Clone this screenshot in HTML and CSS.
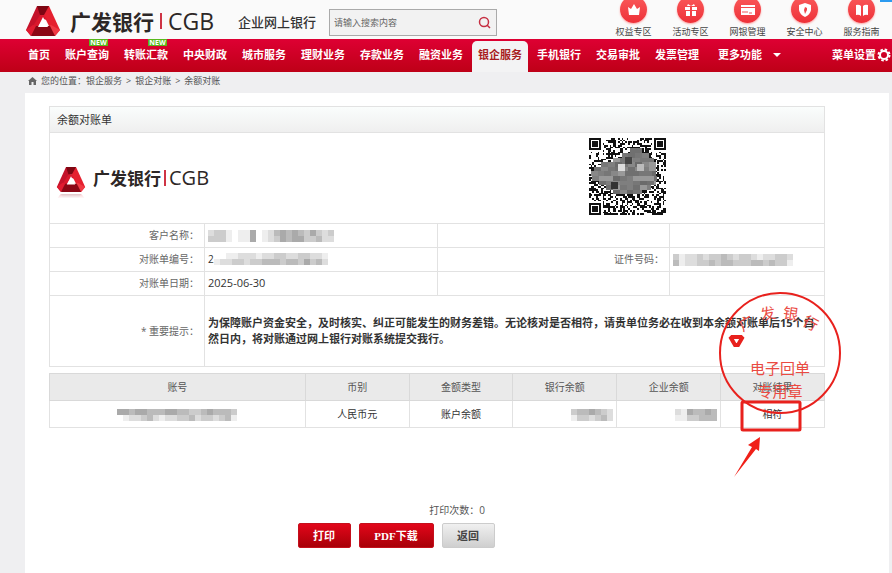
FILE: index.html
```html
<!DOCTYPE html>
<html lang="zh-CN">
<head>
    <meta charset="UTF-8">
    <title>余额对账单</title>
    <link rel="stylesheet" href="styles.css">
</head>
<body>
    <svg class="defs" width="0" height="0" aria-hidden="true">
        <symbol id="mark" viewBox="0 0 36 32">
            <path d="M13 1h-1L1 25l5 6 12-22z" fill="#c4122a"/>
            <path d="M24 1h-1l-5 8 11 22h1l5-6z" fill="#e5202f"/>
            <path d="M12 1h12l-5 9h-4z" fill="#7d0612"/>
            <path d="M15 10h4l3 5-4-1-5 8-5-1z" fill="#d9182c"/>
            <path d="M1 25l7-5 6 2-8 9z" fill="#e01b30"/>
            <path d="M35 25l-9-5-4 2 8 9z" fill="#f03a44"/>
            <path d="M11 21h14l5 10H6z" fill="#8b0715"/>
            <path d="M18 12l5 10H13z" fill="#fff"/>
        </symbol>
    </svg>

    <header class="header">
        <a class="logo" href="#">
            <svg class="logo-mark" viewBox="0 0 36 32"><use href="#mark"/></svg>
            <span class="logo-name">广发银行</span>
            <span class="logo-bar"></span>
            <span class="logo-en">CGB</span>
        </a>
        <span class="site-name">企业网上银行</span>
        <form class="search">
            <input class="search-input" type="text" placeholder="请输入搜索内容" aria-label="搜索">
            <button class="search-btn" type="button" aria-label="搜索">
                <svg width="13" height="13" viewBox="0 0 13 13" fill="none" stroke="#c62f42" stroke-width="1.500"><circle cx="6" cy="6" r="4.500"/><path d="M9 9l3 3"/></svg>
            </button>
        </form>
        <div class="quick">
            <a class="quick-item" href="#">
                <span class="quick-icon"><svg viewBox="0 0 14 14"><path d="M1 4l3 2 3-5 3 5 3-2-1 8H2z"/></svg></span>
                <span>权益专区</span>
            </a>
            <a class="quick-item" href="#">
                <span class="quick-icon"><svg viewBox="0 0 14 14"><path d="M1 4h5v3H1zM8 4h5v3H8zM2 8h4v5H2zM8 8h4v5H8zM4 1l3 2 3-2 1 2H3z"/></svg></span>
                <span>活动专区</span>
            </a>
            <a class="quick-item" href="#">
                <span class="quick-icon"><svg viewBox="0 0 14 14"><path d="M0 2h14v2H0zM0 5h14v7H0z"/><path d="M2 8v2M4 8v2M6 8v2M8 10h3" stroke="#f0555a" fill="none"/></svg></span>
                <span>网银管理</span>
            </a>
            <a class="quick-item" href="#">
                <span class="quick-icon"><svg viewBox="0 0 14 14"><path d="M7 0l6 2v5q-1 5-6 7-5-2-6-7V2z"/><path d="M7 4l2 1v2L7 11 6 7z" fill="#f0454b"/></svg></span>
                <span>安全中心</span>
            </a>
            <a class="quick-item" href="#">
                <span class="quick-icon"><svg viewBox="0 0 14 14"><path d="M1 2q3-1 5 1v10q-2-2-5-1zM8 3q2-2 5-1v10q-3-1-5 1z"/></svg></span>
                <span>服务指南</span>
            </a>
        </div>
        <span class="corner-tab"></span>
    </header>

    <nav class="nav">
        <a href="#">首页</a>
        <a class="new" href="#">账户查询<span class="new-tag">NEW</span></a>
        <a class="new" href="#">转账汇款<span class="new-tag">NEW</span></a>
        <a href="#">中央财政</a>
        <a href="#">城市服务</a>
        <a href="#">理财业务</a>
        <a href="#">存款业务</a>
        <a href="#">融资业务</a>
        <a class="active" href="#">银企服务</a>
        <a href="#">手机银行</a>
        <a href="#">交易审批</a>
        <a href="#">发票管理</a>
        <a class="more" href="#">更多功能<span class="caret"></span></a>
        <a class="setting" href="#">菜单设置<svg width="14" height="14" viewBox="0 0 14 14" fill="none" stroke="#fff"><circle cx="7" cy="7" r="4" stroke-width="2"/><circle cx="7" cy="7" r="5.500" stroke-width="2" stroke-dasharray="2.5 1.82"/></svg></a>
    </nav>

    <div class="crumbs">
        <svg width="9" height="8" viewBox="0 0 9 8"><path d="M4.500 0L9 4H8v4H5.500V5h-2v3H1V4H0z" fill="#666"/></svg>
        <span>您的位置：<a href="#">银企服务</a></span>
        <span>&gt;</span>
        <a href="#">银企对账</a>
        <span>&gt;</span>
        <span>余额对账</span>
    </div>

    <main class="panel">
        <div class="sheet">
            <h1 class="sheet-title">余额对账单</h1>
            <div class="sheet-head">
                <div class="logo logo-small">
                    <svg class="logo-mark" viewBox="0 0 36 32"><use href="#mark"/></svg>
                    <span class="logo-name">广发银行</span>
                    <span class="logo-bar"></span>
                    <span class="logo-en">CGB</span>
                </div>
                <svg class="qr" id="qr" viewBox="0 0 45 45" shape-rendering="crispEdges"></svg>
            </div>

            <table class="info">
                <colgroup><col class="c20"><col class="c30"><col class="c30"><col class="c20"></colgroup>
                <tr>
                    <th>客户名称：</th>
                    <td><svg class="mosaic" data-cells="dccefeeafedbababcacdc|cccefeeafedcabaaccbdd"></svg></td>
                    <td></td>
                    <td></td>
                </tr>
                <tr>
                    <th>对账单编号：</th>
                    <td><span class="masked">2<svg class="mosaic" data-cells="ffeedddeddccddccdde|eddccdccbbbcbbcacbd"></svg></span></td>
                    <th>证件号码：</th>
                    <td><svg class="mosaic" data-cells="ceddcdccbcdccdeddccd|beddccbcbbcccbbcbcce"></svg></td>
                </tr>
                <tr>
                    <th>对账单日期：</th>
                    <td class="date">2025-06-30</td>
                    <td></td>
                    <td></td>
                </tr>
                <tr class="notice">
                    <th>* 重要提示：</th>
                    <td colspan="3">为保障账户资金安全，及时核实、纠正可能发生的财务差错。无论核对是否相符，请贵单位务必在收到本余额对账单后15个自然日内，将对账通过网上银行对账系统提交我行。</td>
                </tr>
            </table>

            <table class="list">
                <thead>
                    <tr>
                        <th class="acct">账号</th>
                        <th>币别</th>
                        <th>金额类型</th>
                        <th>银行余额</th>
                        <th>企业余额</th>
                        <th>对账结果</th>
                    </tr>
                </thead>
                <tbody>
                    <tr>
                        <td><svg class="mosaic" data-cells="aabaabbbaabbccbabbbc|feddcbdeddccbdccdcbe"></svg></td>
                        <td>人民币元</td>
                        <td>账户余额</td>
                        <td class="num"><svg class="mosaic" data-cells="cbbabcd|eccdcbd"></svg></td>
                        <td class="num"><svg class="mosaic" data-cells="deabbab|eeccbbb"></svg></td>
                        <td>相符</td>
                    </tr>
                </tbody>
            </table>

            <!-- 电子回单专用章 -->
            <svg class="stamp" width="126" height="190" viewBox="0 0 126 190">
                <circle cx="63" cy="63" r="60" class="line-thin"/>
                <g class="seal-text">
                    <text transform="translate(32 38) rotate(-30)">广</text>
                    <text transform="translate(52 29) rotate(-10)">发</text>
                    <text transform="translate(73 29) rotate(8)">银</text>
                    <text transform="translate(91 38) rotate(28)">行</text>
                </g>
                <g class="seal-text seal-flat">
                    <text x="63" y="84">电子回单</text>
                    <text x="63" y="107">专用章</text>
                </g>
                <path d="M15 47h9l1 1-4 7h-3l-4-7z" class="line-mark"/>
                <rect x="25" y="112" width="58" height="28" rx="1" class="line-box"/>
                <path d="M17 187L35 157l-4-2 12-8-1 14-3-2z" fill="#f02018"/>
            </svg>
        </div>

        <p class="count">打印次数：<span>0</span></p>
        <div class="actions">
            <button class="btn" type="button">打印</button>
            <button class="btn btn-wide" type="button">PDF下载</button>
            <button class="btn btn-gray" type="button">返回</button>
        </div>
    </main>
    <script src="script.js"></script>
</body>
</html>
```
FILE: styles.css
```css
* {
    box-sizing: border-box;
}
body {
    margin: 0;
    min-height: 100vh;
    display: flex;
    flex-direction: column;
    background: #efeff1;
    color: #333;
    font-family: "Open Sans", "Noto Sans CJK SC", sans-serif;
    font-size: 10px;
}
a {
    color: inherit;
    text-decoration: none;
}
.defs {
    position: absolute;
}

/* header */
.header {
    position: relative;
    display: flex;
    align-items: center;
    height: 39px;
    padding: 0 2px 0 25px;
    background: #fafafa;
    overflow: hidden;
}
.logo {
    display: flex;
    align-items: center;
    color: #2d2726;
    padding-top: 3px;
}
.logo-mark {
    flex: none;
    width: 36px;
    height: 32px;
    margin-right: 9px;
}
.logo-name {
    font-size: 21px;
    font-weight: bold;
    line-height: 32px;
    font-family: "Noto Sans CJK SC", sans-serif;
}
.logo-bar {
    flex: none;
    width: 2px;
    height: 16px;
    margin: 0 6px;
    background: #cf3445;
}
.logo-en {
    font-size: 23px;
    font-weight: 500;
    line-height: 32px;
}
.site-name {
    margin: 4px 0 0 24px;
    font-size: 13px;
    font-weight: 500;
    color: #333;
    white-space: nowrap;
}
.search {
    display: flex;
    width: 168px;
    height: 27px;
    margin: 6px 0 0 13px;
    border: 1px solid #aaa;
    background: #f2f2f2;
}
.search-input {
    flex: 1;
    min-width: 0;
    padding: 0 4px;
    border: 0;
    background: none;
    font: inherit;
    font-size: 9px;
}
.search-input::placeholder {
    color: #666;
}
.search-btn {
    width: 24px;
    padding: 2px 0 0;
    border: 0;
    background: none;
}
.quick {
    display: flex;
    align-self: flex-start;
    margin-left: auto;
    margin-top: -4px;
}
.quick-item {
    display: flex;
    flex-direction: column;
    align-items: center;
    width: 57px;
    font-size: 9px;
    line-height: 17px;
    color: #444;
}
.quick-icon {
    display: flex;
    align-items: center;
    justify-content: center;
    width: 27px;
    height: 27px;
    border-radius: 50%;
    background: linear-gradient(#fa5a5a, #ee3038);
    box-shadow: 0 1px 2px #ffa0a0;
}
.quick-icon svg {
    width: 14px;
    height: 14px;
    fill: #fff;
}
.corner-tab {
    position: absolute;
    top: 0;
    right: 0;
    width: 12px;
    height: 2px;
    background: #2c9bf0;
}

/* menu */
.nav {
    display: flex;
    align-items: flex-end;
    gap: 3px;
    height: 33px;
    padding: 0 1px 0 22px;
    background: linear-gradient(#de0033, #be0017);
    color: #fff;
    font-size: 11px;
    font-weight: bold;
    white-space: nowrap;
}
.nav a {
    position: relative;
    height: 31px;
    padding: 0 6px;
    line-height: 27px;
}
.nav .active {
    color: #a81c20;
    background: #f3f3f4;
    border-radius: 5px 5px 0 0;
}
.new-tag {
    position: absolute;
    top: -2px;
    right: 7px;
    width: 19px;
    height: 7px;
    background: #58b81c;
    font-size: 7px;
    line-height: 7px;
    text-align: center;
}
.nav .more {
    margin-left: 4px;
}
.caret {
    display: inline-block;
    margin-left: 11px;
    border: 4px solid transparent;
    border-top-color: #fff;
    border-bottom: 0;
    vertical-align: 2px;
}
.nav .setting {
    display: flex;
    align-items: center;
    gap: 1px;
    height: 27px;
    margin: 0 0 4px auto;
    padding: 0;
}

.crumbs {
    display: flex;
    align-items: center;
    gap: 4px;
    height: 21px;
    padding: 0 28px 4px;
    font-size: 9px;
    color: #555;
}

/* content */
.panel {
    flex: 1;
    margin: 0 3px 0 25px;
    padding: 13px 0 24px;
    background: #fff;
}
.sheet {
    position: relative;
    margin: 0 64px 0 24px;
}
.sheet-title {
    margin: 0;
    height: 27px;
    padding: 0 7px;
    border: 1px solid #e2e2e2;
    background: linear-gradient(#fafdfc, #efefef);
    font-size: 11px;
    font-weight: normal;
    line-height: 25px;
}
.sheet-head {
    display: flex;
    align-items: center;
    height: 90px;
    padding-left: 6px;
    border: 1px solid #e2e2e2;
    border-width: 0 1px;
}
.logo-small {
    width: 533px;
    padding-top: 0;
}
.logo-small .logo-mark {
    width: 30px;
    height: 27px;
    margin: 2px 7px 0 0;
    -webkit-box-reflect: below 0 linear-gradient(transparent 80%, rgba(0, 0, 0, 0.3));
}
.logo-small .logo-name {
    font-size: 17px;
}
.logo-small .logo-bar {
    margin: 0 3px;
}
.logo-small .logo-en {
    font-size: 20px;
}
.qr {
    width: 77px;
    height: 77px;
    margin-top: -4px;
}
table {
    width: 100%;
    border-collapse: collapse;
    table-layout: fixed;
}
th, td {
    border: 1px solid #e2e2e2;
    font-weight: normal;
}
.c20 {
    width: 20%;
}
.c30 {
    width: 30%;
}
.info th,
.info td {
    height: 24px;
    padding: 0 3px 1px;
    line-height: 16px;
}
.info th {
    padding-right: 5px;
    text-align: right;
    color: #666;
}
.info .date {
    font-size: 11px;
}
.info .notice th,
.info .notice td {
    height: 71px;
}
.info .notice td {
    font-size: 11px;
    font-weight: bold;
}
.masked {
    display: flex;
    align-items: center;
}
.mosaic {
    display: inline-block;
    height: 12px;
    vertical-align: middle;
}
.list {
    margin-top: 6px;
    text-align: center;
}
.list th,
.list td {
    height: 27px;
    padding: 0 0 1px;
}
.list th {
    background: #eaeaea;
    border-color: #d9d9d9;
    color: #555;
}
.list .acct {
    width: 33%;
}
.list .num {
    text-align: right;
    padding-right: 3px;
}

/* seal and callout lie over the tables */
.stamp {
    position: absolute;
    top: 184px;
    right: -18px;
    pointer-events: none;
}
.line-thin, .line-box, .line-mark {
    fill: none;
    stroke: #e8211d;
    stroke-width: 2;
}
.line-box {
    stroke-width: 3;
}
.line-mark {
    stroke-width: 4;
}
.seal-text {
    fill: #ea4a42;
    font-family: "Noto Sans CJK SC", sans-serif;
    font-size: 15px;
    text-anchor: middle;
}

.count {
    margin: 73px 0 0;
    text-align: center;
    line-height: 18px;
    color: #555;
}
.actions {
    display: flex;
    justify-content: center;
    gap: 8px;
    margin-top: 4px;
    padding-right: 122px;
}
.btn {
    width: 53px;
    height: 25px;
    padding: 0 0 2px;
    border: 1px solid #c4101c;
    border-radius: 2px;
    background: linear-gradient(#e2061a, #a80008);
    color: #fff;
    font-family: "Liberation Serif", "Noto Sans CJK SC", serif;
    font-size: 11px;
    font-weight: bold;
}
.btn-wide {
    width: 75px;
}
.btn-gray {
    border-color: #ccc;
    background: linear-gradient(#f0f0f0, #cfcfcf);
    color: #444;
}
```
FILE: script.js
```js
var NS = 'http://www.w3.org/2000/svg';

function rect(svg, x, y, w, h, fill) {
    var r = document.createElementNS(NS, 'rect');
    r.setAttribute('x', x);
    r.setAttribute('y', y);
    r.setAttribute('width', w);
    r.setAttribute('height', h);
    r.setAttribute('fill', fill);
    svg.appendChild(r);
}

// masked values: one hex digit per gray cell, rows split by |
document.querySelectorAll('.mosaic').forEach(function (svg) {
    var rows = svg.dataset.cells.split('|');
    svg.setAttribute('width', rows[0].length * 6);
    rows.forEach(function (row, y) {
        row.split('').forEach(function (c, x) {
            rect(svg, x * 6, y * 6, 6, 6, '#' + c + c + c);
        });
    });
});

// qr code
var qr = document.getElementById('qr');
var size = 45;
var seed = 7;
function next() {
    seed = (seed * 16807) % 2147483647;
    return seed / 2147483647;
}
for (var y = 0; y < size; y++) {
    for (var x = 0; x < size; x++) {
        if (next() < 0.5) rect(qr, x, y, 1, 1, '#111');
    }
}
function finder(x, y) {
    rect(qr, x - 1, y - 1, 9, 9, '#fff');
    rect(qr, x, y, 7, 7, '#111');
    rect(qr, x + 1, y + 1, 5, 5, '#fff');
    rect(qr, x + 2, y + 2, 3, 3, '#111');
}
finder(0, 0);
finder(size - 7, 0);
finder(0, size - 7);

// smear over the middle of the code
var grays = ['#777', '#888', '#6b6b6b', '#999', '#7f7f7f', '#707070'];
var spans = [[24, 31], [19, 35], [14, 38], [7, 39], [3, 39], [1, 39], [2, 40], [6, 39], [10, 36], [14, 31]];
spans.forEach(function (s, i) {
    for (var x = s[0]; x < s[1]; x += 4) {
        rect(qr, x, 6 + i * 2.7, Math.min(4, s[1] - x), 2.7, grays[Math.floor(next() * grays.length)]);
    }
});
rect(qr, 17, 15, 4, 4, '#ddd');
rect(qr, 21, 11, 4, 4, '#444');
rect(qr, 28, 15, 4, 4, '#bbb');
rect(qr, 13, 26, 4, 4, '#333');
```
